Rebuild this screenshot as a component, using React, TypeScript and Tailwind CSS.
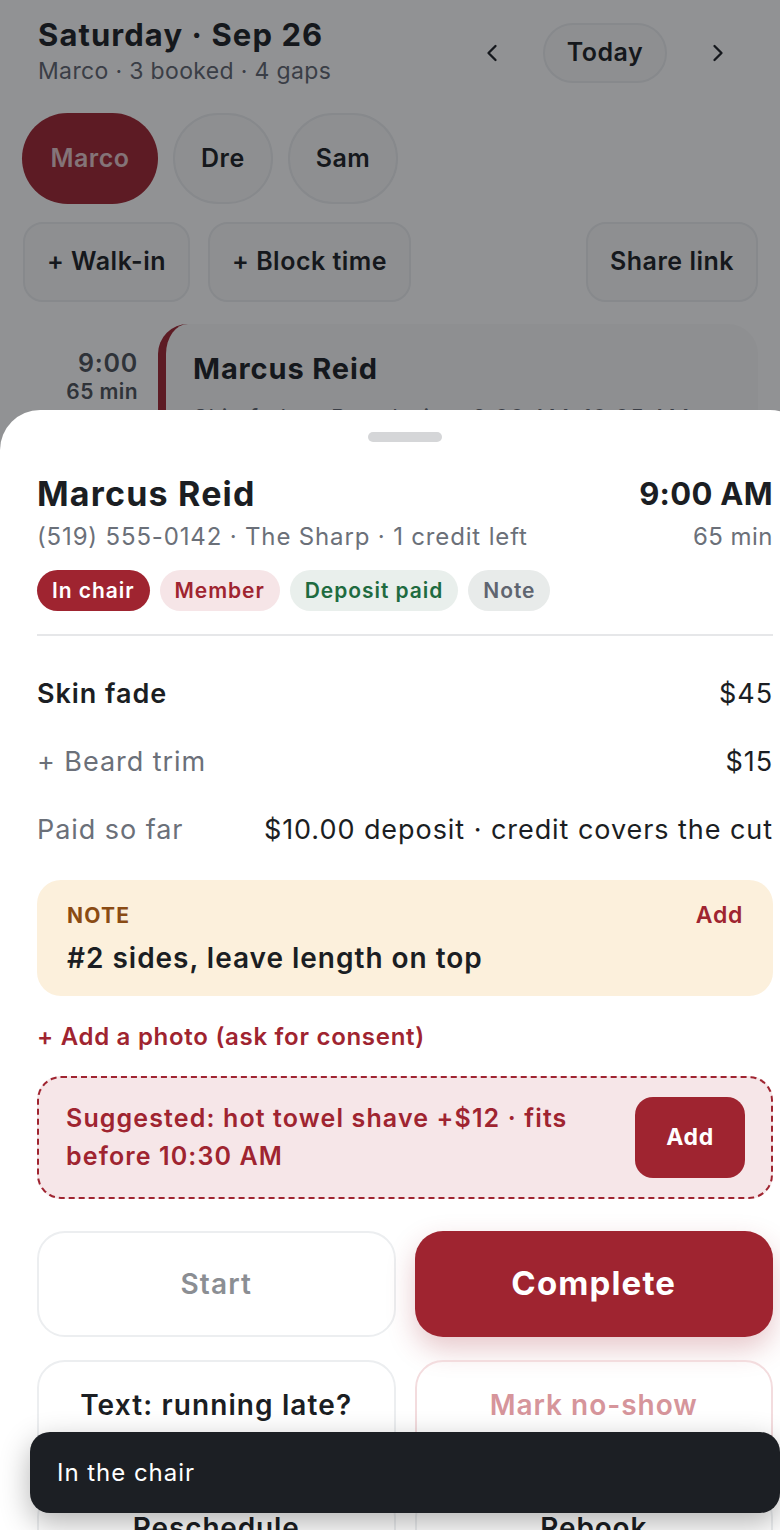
import { ChevronLeft, ChevronRight } from "lucide-react";

function Chip({ label, active }: { label: string; active?: boolean }) {
  return (
    <div
      className={
        active
          ? "h-[91px] w-[136px] rounded-full bg-[#9f2430] text-white/75 flex items-center justify-center text-[25px] font-semibold tracking-[0.02em]"
          : "h-[91px] px-[26px] rounded-full bg-[#fafafa] border-2 border-[#eceef0] text-[#1b1e23] flex items-center text-[25px] font-semibold tracking-[0.02em]"
      }
    >
      {label}
    </div>
  );
}

function Ghost({ label }: { label: string }) {
  return (
    <div className="h-[80px] px-[22px] rounded-[20px] bg-[#fafafa] border-2 border-[#eceef0] text-[#1b1e23] flex items-center text-[25px] font-semibold tracking-[0.02em]">
      {label}
    </div>
  );
}

function Badge({ label, cls }: { label: string; cls: string }) {
  return (
    <span className={"h-[41px] px-[15px] rounded-full flex items-center text-[21px] font-semibold tracking-[0.045em] " + cls}>
      {label}
    </span>
  );
}

function Row({ left, right, leftCls }: { left: string; right: string; leftCls: string }) {
  return (
    <div className="h-[68px] flex items-center justify-between text-[27px] tracking-[0.035em]">
      <span className={leftCls}>{left}</span>
      <span className="text-[#1b1e23]">{right}</span>
    </div>
  );
}

export default function App() {
  return (
    <div
      className="relative w-[780px] h-[1530px] overflow-hidden bg-white"
      style={{ fontFamily: "Inter, 'Noto Sans', sans-serif" }}
    >
      {/* day view underneath */}
      <div className="px-[22px] pt-[16px]">
        <div className="flex items-start justify-between pl-[16px] pr-[26px]">
          <div>
            <h1 className="text-[31px] font-bold text-[#1b1e23] leading-[38px] tracking-[0.035em]">Saturday · Sep 26</h1>
            <p className="text-[23px] text-[#5f6570] leading-[30px] mt-[2px] tracking-[0.015em]">Marco · 3 booked · 4 gaps</p>
          </div>
          <div className="flex items-center gap-[37px] pt-[7px] text-[#1b1e23]">
            <ChevronLeft size={28} strokeWidth={2} />
            <div className="h-[60px] w-[124px] rounded-full bg-[#fafafa] border-2 border-[#eceef0] flex items-center justify-center text-[25px] font-semibold tracking-[0.02em]">
              Today
            </div>
            <ChevronRight size={28} strokeWidth={2} />
          </div>
        </div>
        <div className="flex gap-[15px] mt-[27px]">
          <Chip label="Marco" active />
          <Chip label="Dre" />
          <Chip label="Sam" />
        </div>
        <div className="flex items-center gap-[18px] mt-[18px] pl-[1px]">
          <Ghost label="+ Walk-in" />
          <Ghost label="+ Block time" />
          <div className="flex-1" />
          <Ghost label="Share link" />
        </div>
        <div className="flex gap-[20px] mt-[22px]">
          <div className="w-[116px] text-right pt-[24px]">
            <div className="text-[25px] font-semibold text-[#4b5058] leading-[30px] tracking-[0.03em]">9:00</div>
            <div className="text-[21px] font-semibold text-[#4b5058] leading-[28px] tracking-[0.02em]">65 min</div>
          </div>
          <div className="w-[600px] h-[200px] rounded-[30px] border-l-[8px] border-[#9f2430] bg-[#fafafa] pl-[27px] pt-[23px]">
            <div className="text-[29px] font-bold text-[#1b1e23] tracking-[0.03em]">Marcus Reid</div>
            <div className="text-[23px] text-[#5f6570] mt-[10px] tracking-[0.03em]">Skin fade + Beard trim · 9:00 AM–10:05 AM</div>
          </div>
        </div>
      </div>

      {/* dim overlay */}
      <div className="absolute inset-0 bg-[rgba(15,17,22,0.46)]" />

      {/* bottom sheet */}
      <div className="absolute left-0 top-[410px] w-[810px] h-[1200px] rounded-t-[40px] bg-white pl-[37px]">
        <div className="w-[736px]">
          <div className="flex justify-center pt-[22px]">
            <div className="w-[74px] h-[10px] rounded-full bg-[#d5d6d8]" />
          </div>

          <div className="flex justify-between mt-[32px]">
            <div>
              <div className="text-[34px] font-bold text-[#1b1e23] leading-[40px] tracking-[0.035em]">Marcus Reid</div>
              <div className="text-[24px] text-[#6b7079] leading-[32px] mt-[7px] tracking-[0.035em]">
                (519) 555-0142 · The Sharp · 1 credit left
              </div>
            </div>
            <div className="text-right">
              <div className="text-[31px] font-bold text-[#1b1e23] leading-[40px] tracking-[0.01em]">9:00 AM</div>
              <div className="text-[24px] text-[#6b7079] leading-[32px] mt-[7px] tracking-[0.02em]">65 min</div>
            </div>
          </div>

          <div className="flex gap-[10px] mt-[17px]">
            <Badge label="In chair" cls="bg-[#9f2430] text-white" />
            <Badge label="Member" cls="bg-[#f6e5e7] text-[#9f2430]" />
            <Badge label="Deposit paid" cls="bg-[#e9efec] text-[#1e6b40]" />
            <Badge label="Note" cls="bg-[#e8ebea] text-[#5f6570]" />
          </div>

          <div className="h-[2px] bg-[#e6e7e9] mt-[23px]" />

          <div className="mt-[24px]">
            <Row left="Skin fade" right="$45" leftCls="font-semibold text-[#1b1e23]" />
            <Row left="+ Beard trim" right="$15" leftCls="text-[#6b7079]" />
            <Row left="Paid so far" right="$10.00 deposit · credit covers the cut" leftCls="text-[#6b7079]" />
          </div>

          <div className="mt-[16px] rounded-[24px] bg-[#fcf0dc] px-[30px] pt-[18px] pb-[17px]">
            <div className="flex justify-between items-center">
              <span className="text-[21px] font-bold tracking-[0.06em] text-[#8a4b14]">NOTE</span>
              <span className="text-[23px] font-semibold tracking-[0.03em] text-[#9f2430]">Add</span>
            </div>
            <div className="text-[28px] font-semibold text-[#1b1e23] mt-[4px] tracking-[0.035em]">#2 sides, leave length on top</div>
          </div>

          <div className="mt-[23px] text-[24px] font-semibold text-[#9f2430] tracking-[0.03em]">+ Add a photo (ask for consent)</div>

          <div className="mt-[21px] rounded-[24px] border-2 border-dashed border-[#9f2430] bg-[#f6e6e8] pl-[27px] pr-[26px] py-[19px] flex items-center justify-between">
            <div className="text-[25px] font-semibold text-[#9f2430] leading-[38px] w-[540px] tracking-[0.045em]">
              Suggested: hot towel shave +$12 · fits before 10:30 AM
            </div>
            <div className="w-[110px] h-[81px] rounded-[18px] bg-[#9f2430] text-white text-[23px] font-bold tracking-[0.03em] flex items-center justify-center">
              Add
            </div>
          </div>

          <div className="grid grid-cols-2 gap-x-[19px] gap-y-[23px] mt-[32px]">
            <div className="h-[106px] rounded-[28px] border-2 border-[#eceef0] flex items-center justify-center text-[28px] font-semibold text-[#8b8e93] tracking-[0.04em]">
              Start
            </div>
            <div className="h-[106px] rounded-[28px] bg-[#9f2430] shadow-[0_12px_28px_rgba(159,36,48,0.25)] flex items-center justify-center text-[33px] font-bold text-white tracking-[0.035em]">
              Complete
            </div>
            <div className="h-[106px] rounded-[28px] border-2 border-[#eceef0] text-center pt-[22px] leading-[42px] text-[28px] font-semibold text-[#1b1e23] tracking-[0.04em]">
              Text: running late?
            </div>
            <div className="h-[106px] rounded-[28px] border-2 border-[#f3dcde] text-center pt-[22px] leading-[42px] text-[28px] font-semibold text-[#d6959b] tracking-[0.035em]">
              Mark no-show
            </div>
            <div className="h-[106px] rounded-[28px] border-2 border-[#eceef0] text-center pt-[16px] leading-[42px] text-[28px] font-semibold text-[#1b1e23] tracking-[0.03em]">
              Reschedule
            </div>
            <div className="h-[106px] rounded-[28px] border-2 border-[#eceef0] text-center pt-[16px] leading-[42px] text-[28px] font-semibold text-[#1b1e23] tracking-[0.03em]">
              Rebook
            </div>
          </div>
        </div>
      </div>

      {/* toast */}
      <div className="absolute left-[30px] top-[1432px] w-[750px] rounded-[20px] bg-[#1c1f24] shadow-[0_10px_30px_rgba(0,0,0,0.3)] pl-[27px] py-[24px] leading-[33px] text-[24px] text-white tracking-[0.04em]">
        In the chair
      </div>
    </div>
  );
}
